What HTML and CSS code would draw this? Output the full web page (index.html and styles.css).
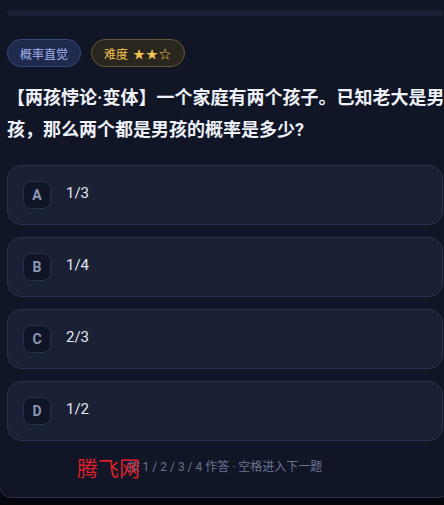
FILE: index.html
```html
<!DOCTYPE html>
<html lang="zh-CN">
<head>
    <meta charset="UTF-8">
    <meta name="viewport" content="width=device-width, initial-scale=1.0">
    <title>两孩悖论</title>
    <link rel="stylesheet" href="styles.css">
</head>
<body>
    <div class="card">
        <div class="progress"><div class="progress-fill"></div></div>
        <div class="tags">
            <span class="tag tag-topic">概率直觉</span>
            <span class="tag tag-level">难度 <span class="stars">★★☆</span></span>
        </div>
        <p class="question">【两孩悖论·变体】一个家庭有两个孩子。已知老大是男孩，那么两个都是男孩的概率是多少?</p>
        <div class="options">
            <div class="option"><span class="letter">A</span><span class="answer">1/3</span></div>
            <div class="option"><span class="letter">B</span><span class="answer">1/4</span></div>
            <div class="option"><span class="letter">C</span><span class="answer">2/3</span></div>
            <div class="option"><span class="letter">D</span><span class="answer">1/2</span></div>
        </div>
        <div class="hint">按 1 / 2 / 3 / 4 作答 · 空格进入下一题
            <span class="watermark">腾飞网</span>
        </div>
    </div>
</body>
</html>
```

FILE: styles.css
```css
html, body {
    margin: 0;
    overflow: hidden;
}
body {
    background-color: #05070d;
    font-family: Roboto, "Noto Sans CJK SC", sans-serif;
    width: 444px;
    height: 505px;
}
.card {
    box-sizing: border-box;
    width: 452px;
    margin-left: -1px;
    margin-top: -10px;
    padding: 19px 7px 21px 7px;
    background-color: #111627;
    border: 1px solid #283049;
    border-radius: 12px;
}
.progress {
    height: 6px;
    border-radius: 3px;
    background-color: #1a2035;
}
.progress-fill {
    width: 0;
    height: 100%;
}
.tags {
    display: flex;
    gap: 10px;
    margin-top: 23px;
}
.tag {
    display: inline-flex;
    align-items: center;
    height: 28px;
    box-sizing: border-box;
    padding: 0 12px;
    border-radius: 14px;
    font-size: 12px;
}
.tag-topic {
    background-color: #1f2a4d;
    border: 1px solid #34477e;
    color: #a3b2ef;
}
.tag-level {
    background-color: #29261f;
    border: 1px solid #685634;
    color: #f3c252;
}
.stars {
    margin-left: 5px;
    letter-spacing: 1px;
}
.question {
    margin: 15px -12px 0 0;
    font-size: 18px;
    font-weight: 700;
    line-height: 32px;
    color: #eef1f7;
}
.options {
    display: flex;
    flex-direction: column;
    gap: 12px;
    margin-top: 19px;
}
.option {
    display: flex;
    align-items: center;
    gap: 15px;
    height: 60px;
    box-sizing: border-box;
    padding: 0 15px;
    background-color: #1a2134;
    border: 1px solid #283150;
    border-radius: 14px;
}
.letter {
    display: flex;
    align-items: center;
    justify-content: center;
    width: 28px;
    height: 28px;
    box-sizing: border-box;
    background-color: #0f1526;
    border: 1px solid #283150;
    border-radius: 8px;
    color: #8c96b6;
    font-size: 14px;
    font-weight: 700;
}
.answer {
    font-size: 15px;
    color: #e4e8f1;
    margin-top: -4px;
}
.hint {
    position: relative;
    margin-top: 17px;
    text-align: center;
    font-size: 12px;
    line-height: 18px;
    color: #6b7491;
}
.watermark {
    position: absolute;
    left: 70px;
    top: 0;
    font-family: "Noto Sans CJK SC", sans-serif;
    font-size: 21px;
    color: #dc1f2b;
}
```
